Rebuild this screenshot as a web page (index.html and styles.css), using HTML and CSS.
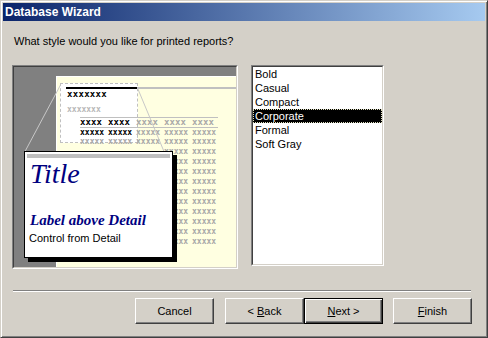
FILE: index.html
```html
<!DOCTYPE html>
<html lang="en">
<head>
<meta charset="UTF-8" />
<title>Database Wizard</title>
<link rel="stylesheet" href="styles.css">
</head>
<body>

<div class="window">
  <div class="titlebar">Database Wizard</div>

  <div class="body">
    <p class="prompt">What style would you like for printed reports?</p>

    <div class="main">
      <!-- Report preview -->
      <div class="preview">
        <div class="preview-inner">
          <div class="page">
            <div class="zoom-box"></div>
            <div class="hdr"><span class="dark"></span><span class="rest"></span></div>
            <div class="ph ph-title">xxxxxxx</div>
            <div class="ph ph-label">xxxxxxx</div>
            <div class="grid">
              <div class="row ruled wide"><span class="on">xxxx</span><span class="on">xxxx</span><span>xxxx</span><span>xxxx</span><span>xxxx</span></div>
              <div class="row ruled"><span class="on">xxxxx</span><span class="on">xxxxx</span><span>xxxxx</span><span>xxxxx</span><span>xxxxx</span></div>
              <div class="row"><span>xxxxx</span><span>xxxxx</span><span>xxxxx</span><span>xxxxx</span><span>xxxxx</span></div>
              <!-- rows below are partly behind the card -->
              <div class="row"><span></span><span></span><span></span><span>xxxxx</span><span>xxxxx</span></div>
              <div class="row"><span></span><span></span><span></span><span>xxxxx</span><span>xxxxx</span></div>
              <div class="row"><span></span><span></span><span></span><span>xxxxx</span><span>xxxxx</span></div>
              <div class="row"><span></span><span></span><span></span><span>xxxxx</span><span>xxxxx</span></div>
              <div class="row"><span></span><span></span><span></span><span>xxxxx</span><span>xxxxx</span></div>
              <div class="row"><span></span><span></span><span></span><span>xxxxx</span><span>xxxxx</span></div>
              <div class="row"><span></span><span></span><span></span><span>xxxxx</span><span>xxxxx</span></div>
              <div class="row"><span></span><span></span><span></span><span>xxxxx</span><span>xxxxx</span></div>
              <div class="row"><span></span><span></span><span></span><span>xxxxx</span><span>xxxxx</span></div>
              <div class="row"><span></span><span></span><span></span><span>xxxxx</span><span>xxxxx</span></div>
            </div>
          </div>

          <svg class="zoom-lines" width="222" height="200">
            <line x1="46.5" y1="18" x2="11" y2="84.5" />
            <line x1="123.5" y1="21" x2="150" y2="84.5" />
          </svg>

          <div class="card">
            <div class="card-bar"></div>
            <div class="card-title">Title</div>
            <div class="card-label">Label above Detail</div>
            <div class="card-control">Control from Detail</div>
          </div>
        </div>
      </div>

      <!-- Style list -->
      <div class="listbox">
        <ul>
          <li>Bold</li>
          <li>Casual</li>
          <li>Compact</li>
          <li class="selected"><span>Corporate</span></li>
          <li>Formal</li>
          <li>Soft Gray</li>
        </ul>
      </div>
    </div>

    <div class="separator"></div>

    <div class="buttons">
      <button>Cancel</button>
      <div class="pair">
        <button>&lt; <u>B</u>ack</button>
        <button class="default"><u>N</u>ext &gt;</button>
      </div>
      <button><u>F</u>inish</button>
    </div>
  </div>
</div>

</body>
</html>
```

FILE: styles.css
```css
body {
  margin: 0;
  background: #d4d0c8;
  font-family: "Liberation Sans", Arial, sans-serif;
  font-size: 11px;
  color: #000;
}
.window {
  width: 488px;
  height: 338px;
  box-sizing: border-box;
  border: 1px solid;
  border-color: #d4d0c8 #404040 #404040 #d4d0c8;
  box-shadow: inset 1px 1px #fff, inset -1px -1px #808080;
  padding: 2px;
  background: #d4d0c8;
}
.titlebar {
  height: 18px;
  line-height: 19px;
  padding-left: 2px;
  background: linear-gradient(to right, #0a246a, #a6caf0);
  color: #fff;
  font-weight: bold;
  font-size: 12px;
}
.body {
  padding: 14px 13px 0 9px;
}
.prompt {
  margin: 0 0 17px 2px;
  line-height: 13px;
}
.main {
  display: flex;
  align-items: flex-start;
  gap: 13px;
}

/* Preview */
.preview {
  width: 226px;
  height: 204px;
  box-sizing: border-box;
  border: 1px solid;
  border-color: #808080 #fff #fff #808080;
}
.preview-inner {
  position: relative;
  height: 100%;
  box-sizing: border-box;
  border: 1px solid;
  border-color: #404040 #d4d0c8 #d4d0c8 #404040;
  background: #808080;
  overflow: hidden;
}
.page {
  position: absolute;
  left: 42px;
  top: 9px;
  right: 0;
  bottom: 0;
  background: #ffffe1;
  border-top: 1px solid #fff;
  border-left: 1px solid #fff;
  padding: 10px 0 0 9px;
  font-family: "DejaVu Sans Mono", monospace;
  font-size: 9px;
  font-weight: bold;
  color: #a8a8a8;
}
.zoom-box {
  position: absolute;
  left: 3px;
  top: 6px;
  width: 76px;
  height: 58px;
  background: #fff;
  border: 1px dashed #c0c0c0;
}
.hdr {
  position: relative;
  display: flex;
  height: 2px;
}
.hdr .dark {
  width: 71px;
  background: #000;
}
.hdr .rest {
  flex: 1;
  background: #c0c0c0;
}
.ph {
  position: relative;
  height: 10px;
  line-height: 10px;
  margin-left: 1px;
  letter-spacing: 0.3px;
}
.ph-title {
  color: #000;
}
.ph-label {
  margin-top: 6px;
  font-size: 8px;
  letter-spacing: 0;
  color: #b8b8b8;
}
.grid {
  position: relative;
  width: 138px;
  margin: 2px 0 0 14px;
}
.row {
  display: flex;
  height: 10px;
  line-height: 10px;
  font-size: 8px;
}
.row.ruled {
  height: 9px;
  line-height: 9px;
  border-top: 1px solid #c0c0c0;
}
.row span {
  flex: none;
  width: 28px;
}
.row.wide {
  font-size: 9px;
}
.row.wide span {
  letter-spacing: 0.1px;
}
.row .on {
  color: #000;
}
.zoom-lines {
  position: absolute;
  left: 0;
  top: 0;
}
.zoom-lines line {
  stroke: #c8c8c8;
  stroke-width: 1;
}
.card {
  position: absolute;
  left: 10px;
  top: 84px;
  width: 149px;
  height: 107px;
  box-sizing: border-box;
  border: 1px solid #000;
  background: #fff;
  box-shadow: 4px 4px 0 #000;
  padding: 2px 2px 0 2px;
}
.card-bar {
  height: 4px;
  background: #c0c0c0;
}
.card-title {
  padding-left: 3px;
  font-family: "Liberation Serif", "Times New Roman", serif;
  font-style: italic;
  font-size: 28px;
  line-height: 32px;
  color: #000080;
}
.card-label {
  margin-top: 21px;
  padding-left: 3px;
  font-family: "Liberation Serif", "Times New Roman", serif;
  font-style: italic;
  font-weight: bold;
  font-size: 15px;
  line-height: 18px;
  color: #000080;
}
.card-control {
  margin-top: 3px;
  padding-left: 2px;
  line-height: 13px;
}

/* List */
.listbox {
  width: 133px;
  height: 201px;
  box-sizing: border-box;
  border: 1px solid;
  border-color: #808080 #fff #fff #808080;
}
.listbox ul {
  list-style: none;
  margin: 0;
  padding: 0;
  height: 100%;
  box-sizing: border-box;
  border: 1px solid;
  border-color: #404040 #d4d0c8 #d4d0c8 #404040;
  background: #fff;
}
.listbox li {
  height: 14px;
  line-height: 14px;
  padding-left: 2px;
}
.listbox li.selected {
  background: #000;
  color: #fff;
  outline: 1px dotted #e0e0c0;
  outline-offset: -1px;
}

/* Footer */
.separator {
  margin: 21px 1px 0 1px;
  border-top: 1px solid #808080;
  border-bottom: 1px solid #fff;
}
.buttons {
  display: flex;
  justify-content: flex-end;
  gap: 10px;
  margin-top: 6px;
}
.buttons .pair {
  display: flex;
  margin-left: 1px;
}
.buttons button {
  width: 79px;
  height: 26px;
  padding: 0;
  font-family: inherit;
  font-size: 11px;
  line-height: 13px;
  color: #000;
  background: #d4d0c8;
  border: 1px solid;
  border-color: #fff #404040 #404040 #fff;
  box-shadow: inset -1px -1px #808080;
}
.buttons button.default {
  border-color: #000;
  box-shadow: inset 1px 1px #fff, inset -1px -1px #404040, inset -2px -2px #808080;
}
```
